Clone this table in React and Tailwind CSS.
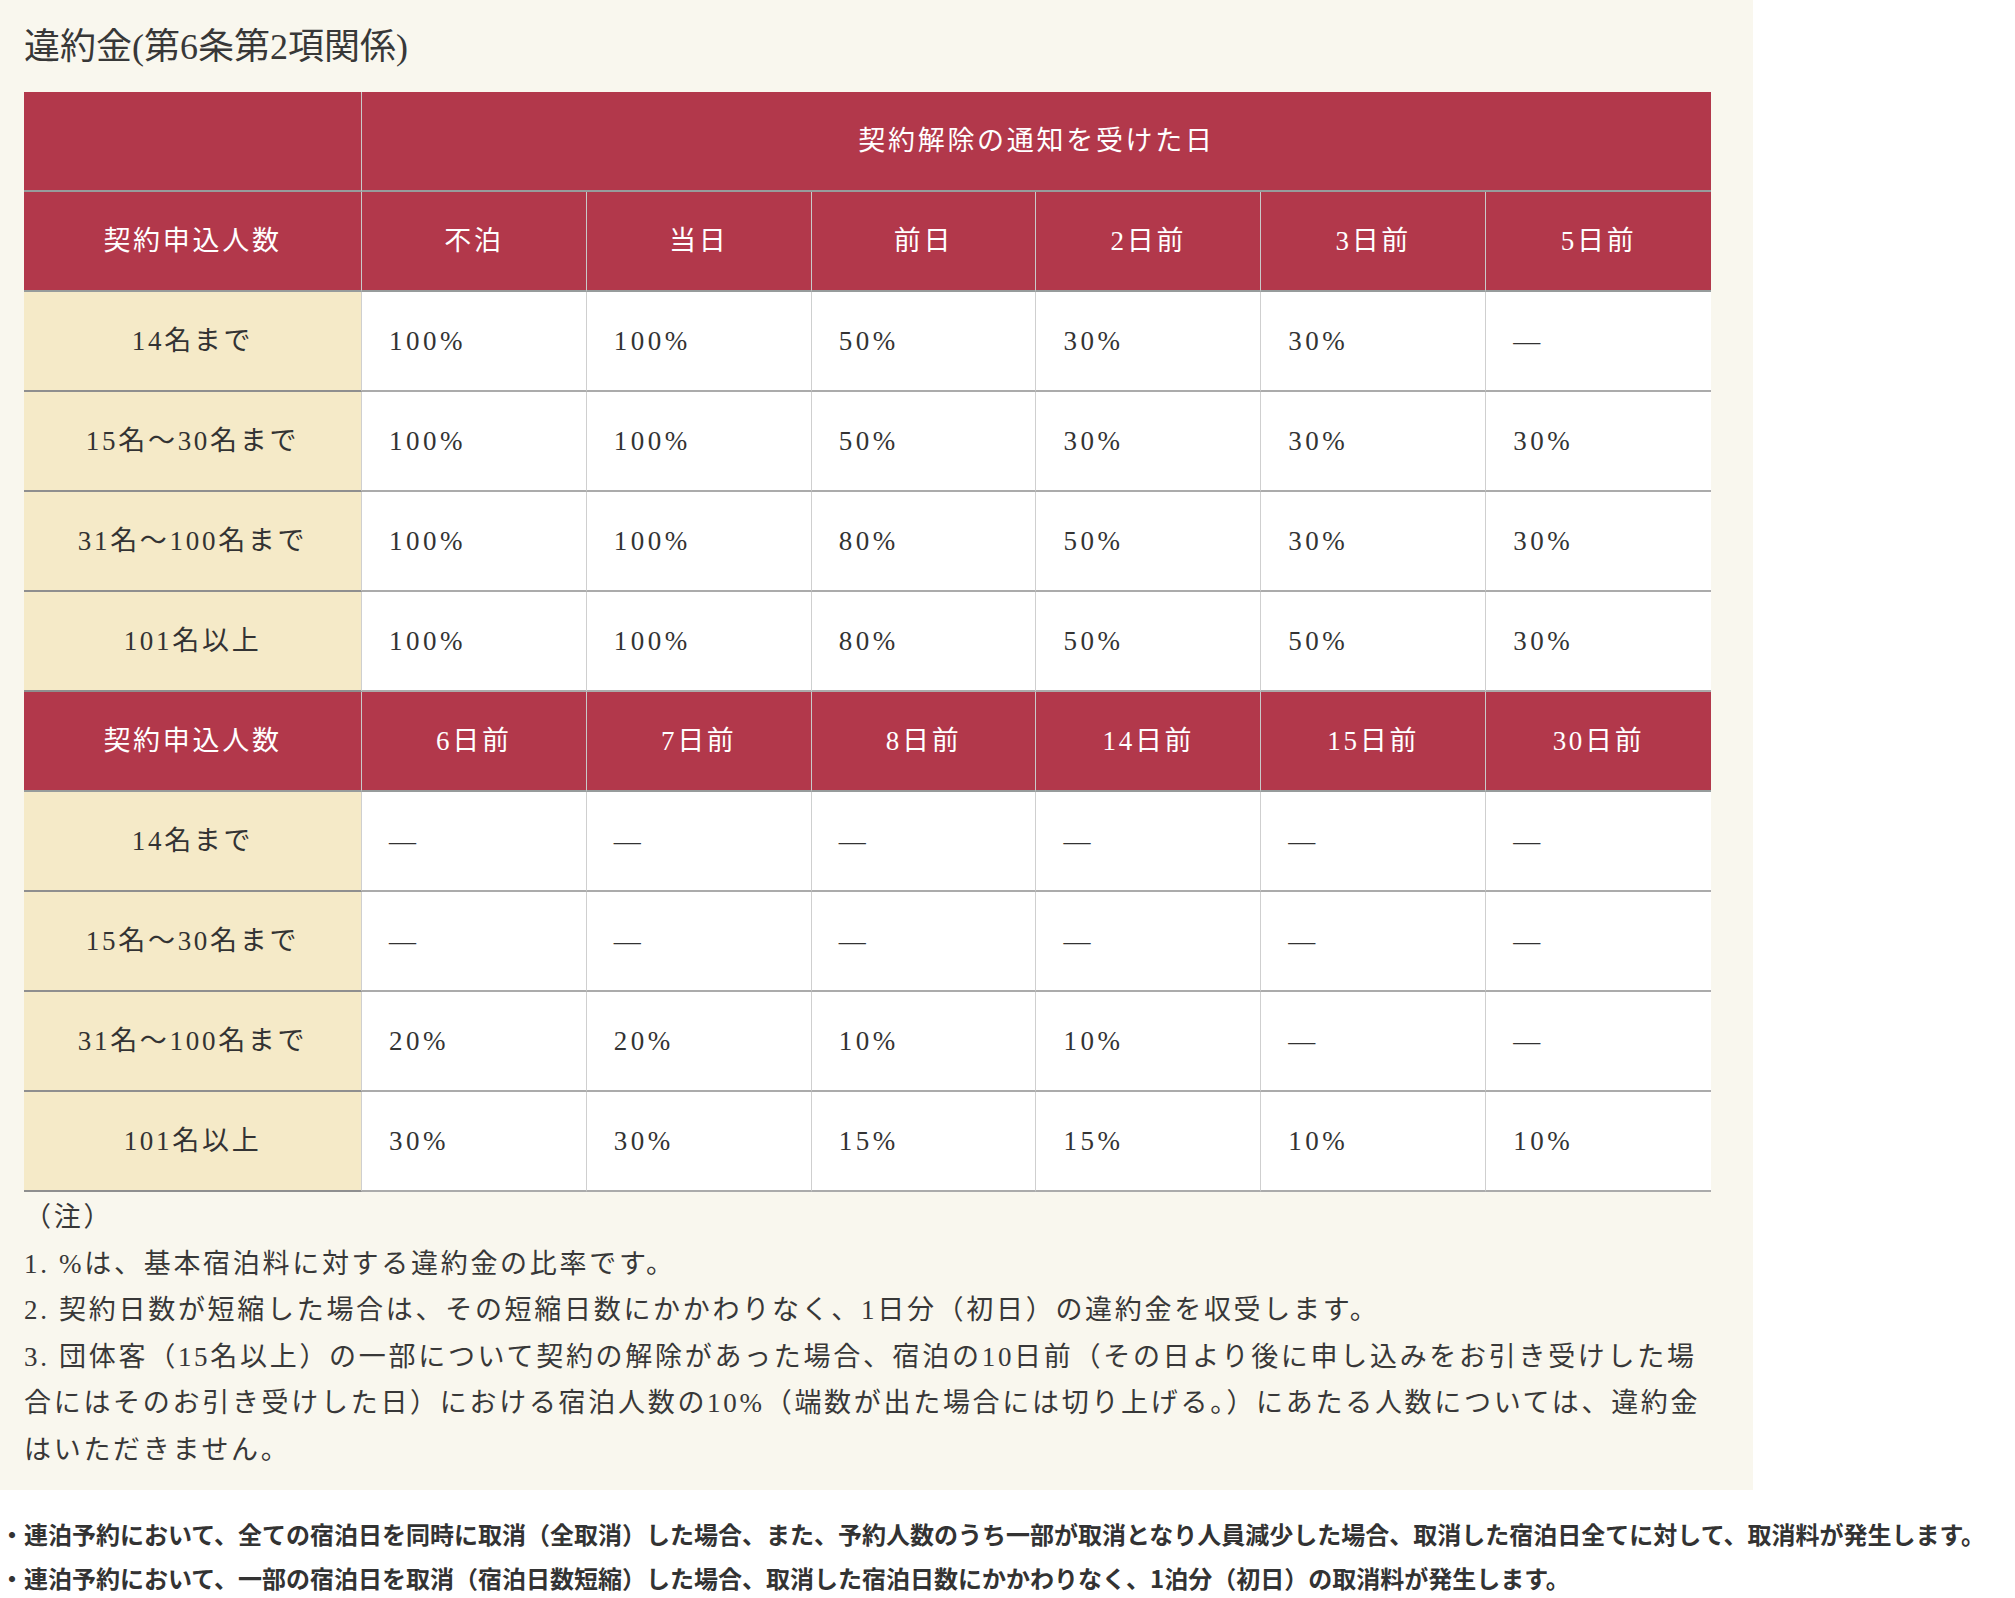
import React from "react";

const FONT = { fontFamily: '"Liberation Serif", "Noto Sans CJK JP", serif' };
const GOTHIC = { fontFamily: '"Noto Sans CJK JP", "Noto Sans", sans-serif' };

const top = ["不泊", "当日", "前日", "2日前", "3日前", "5日前"];
const topRows = [
  ["14名まで", ["100%", "100%", "50%", "30%", "30%", "—"]],
  ["15名～30名まで", ["100%", "100%", "50%", "30%", "30%", "30%"]],
  ["31名～100名まで", ["100%", "100%", "80%", "50%", "30%", "30%"]],
  ["101名以上", ["100%", "100%", "80%", "50%", "50%", "30%"]],
];
const bottom = ["6日前", "7日前", "8日前", "14日前", "15日前", "30日前"];
const bottomRows = [
  ["14名まで", ["—", "—", "—", "—", "—", "—"]],
  ["15名～30名まで", ["—", "—", "—", "—", "—", "—"]],
  ["31名～100名まで", ["20%", "20%", "10%", "10%", "—", "—"]],
  ["101名以上", ["30%", "30%", "15%", "15%", "10%", "10%"]],
];

function H({ children, last }) {
  return (
    <div
      className={
        "flex h-[100px] items-center justify-center bg-[#b2384b] text-white border-b-2 border-b-[#979c9c] " +
        (last ? "" : "border-r border-r-[#c9c9c9]")
      }
    >
      <span className="tracking-[0.1em]">{children}</span>
    </div>
  );
}

function L({ children }) {
  return (
    <div className="flex h-[100px] items-center justify-center bg-[#f5eac8] border-b-2 border-b-[#8f8f8f] border-r border-r-[#cfcfcf] text-[#333]">
      <span className="tracking-[0.1em]">{children}</span>
    </div>
  );
}

function D({ children, last }) {
  return (
    <div
      className={
        "flex h-[100px] items-center pl-[27px] bg-white border-b-2 border-b-[#ababab] text-[#333] " +
        (last ? "" : "border-r border-r-[#cfcfcf]")
      }
    >
      <span className="tracking-[0.13em]">{children}</span>
    </div>
  );
}

function Section({ heads, rows }) {
  return (
    <>
      <H>契約申込人数</H>
      {heads.map((h, i) => (
        <H key={h} last={i === 5}>
          {h}
        </H>
      ))}
      {rows.map(([label, vals]) => (
        <React.Fragment key={label}>
          <L>{label}</L>
          {vals.map((v, i) => (
            <D key={i} last={i === 5}>
              {v}
            </D>
          ))}
        </React.Fragment>
      ))}
    </>
  );
}

export default function App() {
  return (
    <div className="min-h-[1598px] w-full bg-white">
      <div className="w-[1753px] bg-[#f9f7ee] pl-[24px] pt-[20px] pb-[17px]" style={FONT}>
        <h2 className="mb-[18px] text-[36px] leading-[54px] font-normal text-[#383838]">
          違約金(第6条第2項関係)
        </h2>
        <div className="grid w-[1687px] grid-cols-[338px_repeat(6,minmax(0,1fr))] text-[27px] leading-none">
          <div className="h-[100px] bg-[#b2384b] border-b-2 border-b-[#979c9c] border-r border-r-[#c9c9c9]"></div>
          <div className="col-span-6 flex h-[100px] items-center justify-center bg-[#b2384b] text-white border-b-2 border-b-[#979c9c]">
            <span className="tracking-[0.1em]">契約解除の通知を受けた日</span>
          </div>
          <Section heads={top} rows={topRows} />
          <Section heads={bottom} rows={bottomRows} />
        </div>
        <div className="mt-[2px] text-[27px] leading-[46.5px] tracking-[0.1em] text-[#383838]">
          <div>（注）</div>
          <div className="whitespace-nowrap">1. %は、基本宿泊料に対する違約金の比率です。</div>
          <div className="whitespace-nowrap">
            2. 契約日数が短縮した場合は、その短縮日数にかかわりなく、1日分（初日）の違約金を収受します。
          </div>
          <div className="whitespace-nowrap">
            3. 団体客（15名以上）の一部について契約の解除があった場合、宿泊の10日前（その日より後に申し込みをお引き受けした場
          </div>
          <div className="whitespace-nowrap">
            合にはそのお引き受けした日）における宿泊人数の10%（端数が出た場合には切り上げる。）にあたる人数については、違約金
          </div>
          <div className="whitespace-nowrap">はいただきません。</div>
        </div>
      </div>
      <div className="mt-[22px] text-[24px] leading-[44px] font-bold text-[#333]" style={GOTHIC}>
        <div className="whitespace-nowrap">
          ・連泊予約において、全ての宿泊日を同時に取消（全取消）した場合、また、予約人数のうち一部が取消となり人員減少した場合、取消した宿泊日全てに対して、取消料が発生します。
        </div>
        <div className="whitespace-nowrap">
          ・連泊予約において、一部の宿泊日を取消（宿泊日数短縮）した場合、取消した宿泊日数にかかわりなく、1泊分（初日）の取消料が発生します。
        </div>
      </div>
    </div>
  );
}
